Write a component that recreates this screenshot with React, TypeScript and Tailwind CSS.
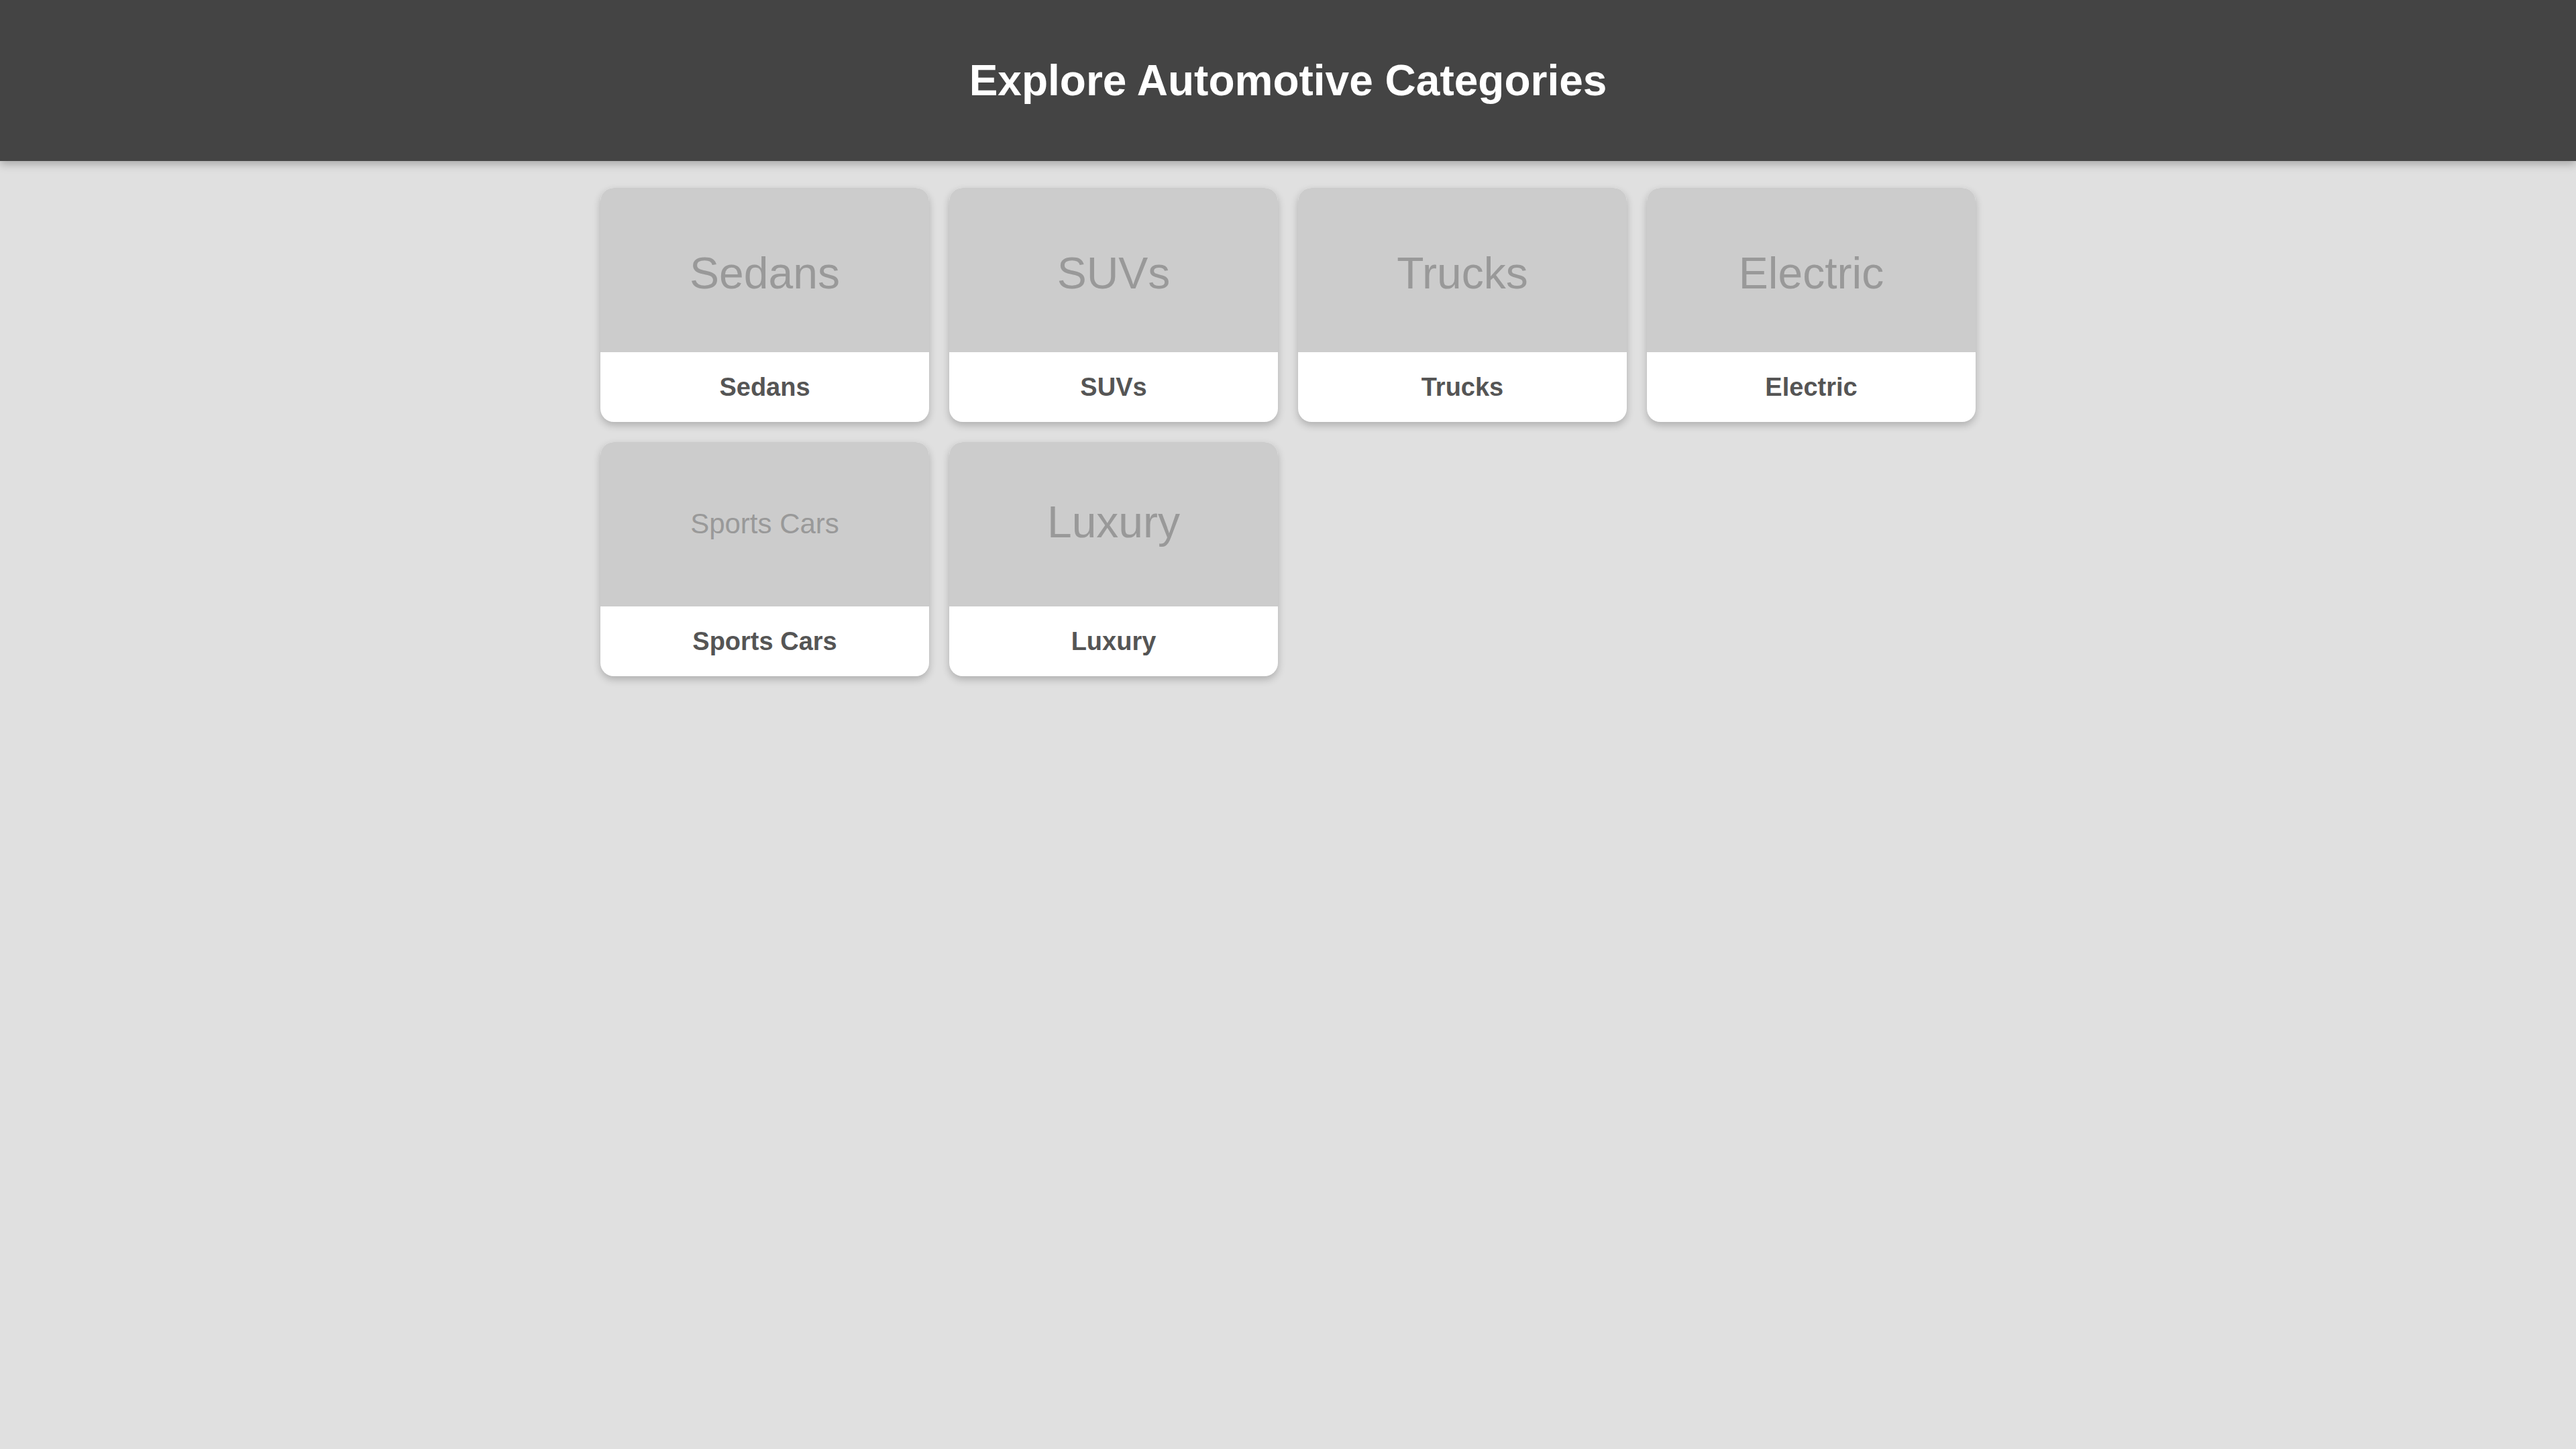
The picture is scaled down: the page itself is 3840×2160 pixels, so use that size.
import React from 'react';

interface Category {
  name: string;
  imageText: string;
}

// image text classes differ per tile (placeholder art is centred by its ink, not its line box)
const categories: Category[] = [
  { name: 'Sedans', imageText: 'text-[66px] pt-[8px]' },
  { name: 'SUVs', imageText: 'text-[66px] pt-[8px]' },
  { name: 'Trucks', imageText: 'text-[66px] pt-[8px]' },
  { name: 'Electric', imageText: 'text-[66px] pt-[8px]' },
  { name: 'Sports Cars', imageText: 'text-[42px] pb-[2px]' },
  { name: 'Luxury', imageText: 'text-[66px] pb-[7px]' },
];

function CategoryCard({ category }: { category: Category }) {
  return (
    <div className="w-[490px] bg-white rounded-[20px] overflow-hidden shadow-[0_5px_12px_rgba(0,0,0,0.22)] cursor-pointer">
      <div className="h-[245px] bg-[#cccccc] flex items-center justify-center">
        <span className={`${category.imageText} text-[#999999] leading-none`}>{category.name}</span>
      </div>
      <div className="h-[104px] flex items-center justify-center">
        <span className="text-[38px] font-bold text-[#555555] leading-none">{category.name}</span>
      </div>
    </div>
  );
}

export default function App() {
  return (
    <div className="min-h-screen bg-[#e0e0e0] font-['Liberation_Sans',Arial,sans-serif]">
      <header className="h-[240px] bg-[#444444] flex items-center justify-center shadow-[0_5px_12px_rgba(0,0,0,0.25)] relative">
        <h1 className="text-[64px] font-bold text-white leading-none">Explore Automotive Categories</h1>
      </header>

      <main className="pt-[40px]">
        <div className="grid grid-cols-[repeat(4,490px)] gap-[30px] justify-center">
          {categories.map((c) => (
            <CategoryCard key={c.name} category={c} />
          ))}
        </div>
      </main>
    </div>
  );
}
